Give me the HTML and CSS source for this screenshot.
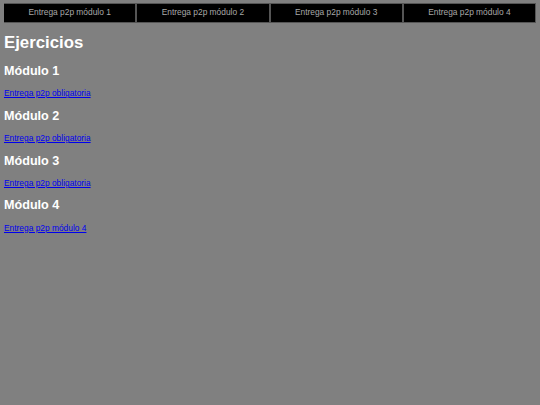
FILE: index.html
```html
<!DOCTYPE html>
<html lang="es">
<head>
<meta charset="utf-8">
<title>Ejercicios</title>
<link rel="stylesheet" href="styles.css">
</head>
<body>
<nav class="topnav">
  <a class="topnav-item" href="#m1">Entrega p2p módulo 1</a>
  <a class="topnav-item" href="#m2">Entrega p2p módulo 2</a>
  <a class="topnav-item" href="#m3">Entrega p2p módulo 3</a>
  <a class="topnav-item" href="#m4">Entrega p2p módulo 4</a>
</nav>
<h1 class="title">Ejercicios</h1>
<h2 class="module" id="m1">Módulo 1</h2>
<p class="entry"><a href="#">Entrega p2p obligatoria</a></p>
<h2 class="module" id="m2">Módulo 2</h2>
<p class="entry"><a href="#">Entrega p2p obligatoria</a></p>
<h2 class="module" id="m3">Módulo 3</h2>
<p class="entry"><a href="#">Entrega p2p obligatoria</a></p>
<h2 class="module" id="m4">Módulo 4</h2>
<p class="entry"><a href="#">Entrega p2p módulo 4</a></p>
</body>
</html>
```
FILE: styles.css
```css
html {
  background: #808080;
}
body {
  margin: 3px 4px 4px 4px;
  font-family: "Liberation Sans", Arial, sans-serif;
  font-size: 8.4px;
  color: #ffffff;
}
.topnav {
  display: flex;
  margin: 0 0 0 -1px;
}
.topnav-item {
  flex: 1;
  background: #000000;
  border: 1px solid #555555;
  color: #a8a8a8;
  text-align: center;
  text-decoration: none;
  padding: 4px 0;
  line-height: 9.7px;
}
.title {
  font-size: 2em;
  margin: 10px 0 11px;
}
.module {
  font-size: 1.5em;
  margin: 0.83em 0;
}
.entry {
  margin: 1em 0;
}
.entry a {
  color: #0000ee;
}
```
